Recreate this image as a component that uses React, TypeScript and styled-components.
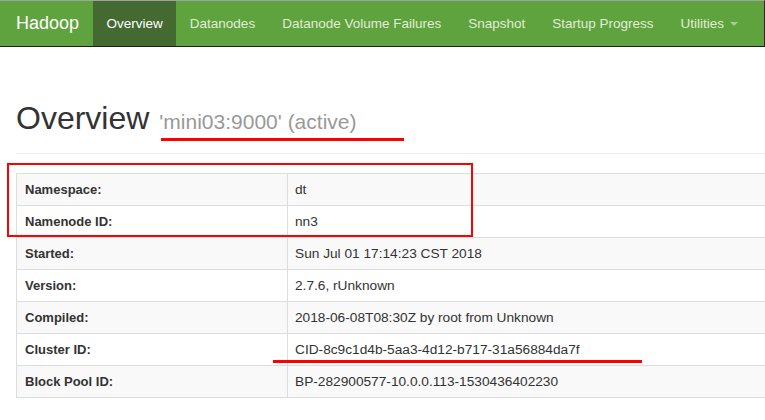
import React, { FC } from 'react';
import styled, { createGlobalStyle } from 'styled-components';

type InfoRow = {
    label: string
    value: string
}

const rows: InfoRow[] = [
    {label: 'Namespace:', value: 'dt'},
    {label: 'Namenode ID:', value: 'nn3'},
    {label: 'Started:', value: 'Sun Jul 01 17:14:23 CST 2018'},
    {label: 'Version:', value: '2.7.6, rUnknown'},
    {label: 'Compiled:', value: '2018-06-08T08:30Z by root from Unknown'},
    {label: 'Cluster ID:', value: 'CID-8c9c1d4b-5aa3-4d12-b717-31a56884da7f'},
    {label: 'Block Pool ID:', value: 'BP-282900577-10.0.0.113-1530436402230'},
]

const navItems = ['Overview', 'Datanodes', 'Datanode Volume Failures', 'Snapshot', 'Startup Progress']

const App: FC = () => {
    return (
        <>
            <GlobalStyle/>
            <Navbar>
                <Brand>Hadoop</Brand>
                {navItems.map((item, i) => (
                    <NavItem key={item} active={i === 0}>{item}</NavItem>
                ))}
                <NavItem>
                    Utilities
                    <Caret/>
                </NavItem>
            </Navbar>
            <Content>
                <PageHeader>
                    <Title>
                        Overview
                        <Subtitle>'mini03:9000' (active)</Subtitle>
                    </Title>
                </PageHeader>
                <InfoTable>
                    <tbody>
                    {rows.map((row, i) => (
                        <Row key={row.label} striped={i % 2 === 0}>
                            <Label>{row.label}</Label>
                            <Value>{row.value}</Value>
                        </Row>
                    ))}
                    </tbody>
                </InfoTable>
                {/* red annotations drawn over the page */}
                <Underline style={{left: 161, top: 91, width: 243, height: 3}}/>
                <Underline style={{left: 273, top: 313, width: 369, height: 2.5}}/>
                <HighlightBox/>
            </Content>
        </>
    )
};

export default App;

const GlobalStyle = createGlobalStyle`
  body {
    margin: 0;
    overflow: hidden;
    background: #fff;
    font-family: "Liberation Sans", Arial, sans-serif;
    color: #333;
  }
`

let Navbar = styled.nav`
  display: flex;
  align-items: stretch;
  height: 45px;
  background-color: #5fa33e;
  border-top: 1px solid #a3a3a3;
  border-bottom: 1px solid #1c1c1c;
  border-right: 1px solid #2a2a2a;
`

let Brand = styled.div`
  display: flex;
  align-items: center;
  padding: 0 14px 0 16px;
  font-size: 18px;
  color: #fff;
`

let NavItem = styled.div<{ active?: boolean }>`
  display: flex;
  align-items: center;
  padding: 0 13.5px;
  font-size: 13.5px;
  color: ${p => p.active ? '#fff' : '#e2ecd8'};
  background-color: ${p => p.active ? '#446a31' : 'transparent'};
  white-space: nowrap;
`

let Caret = styled.span`
  display: inline-block;
  margin-left: 6px;
  margin-top: 1px;
  border-top: 4px solid rgba(255, 255, 255, 0.45);
  border-left: 4px solid transparent;
  border-right: 4px solid transparent;
`

let Content = styled.div`
  position: relative;
  padding: 54px 0 0 16px;
`

let PageHeader = styled.div`
  padding-bottom: 17px;
  border-bottom: 1px solid #eee;
`

let Title = styled.h1`
  margin: 0;
  font-size: 32px;
  font-weight: 400;
  line-height: 1.1;
  color: #333;
`

let Subtitle = styled.small`
  margin-left: 10px;
  font-size: 21px;
  color: #999;
`

let InfoTable = styled.table`
  margin-top: 19px;
  width: calc(100% + 20px);
  border-collapse: collapse;
  border: 1px solid #ddd;
`

let Row = styled.tr<{ striped?: boolean }>`
  background-color: ${p => p.striped ? '#f9f9f9' : '#fff'};
`

let Label = styled.th`
  width: 254px;
  height: 31px;
  padding: 0 8px;
  border: 1px solid #ddd;
  text-align: left;
  font-size: 13px;
  font-weight: 700;
  color: #333;
`

let Value = styled.td`
  height: 31px;
  padding: 0 7px;
  border: 1px solid #ddd;
  font-size: 13.7px;
  color: #333;
`

let Underline = styled.div`
  position: absolute;
  background-color: #f00;
`

let HighlightBox = styled.div`
  position: absolute;
  left: 7px;
  top: 116px;
  width: 462px;
  height: 70px;
  border: 2px solid #f00;
`
